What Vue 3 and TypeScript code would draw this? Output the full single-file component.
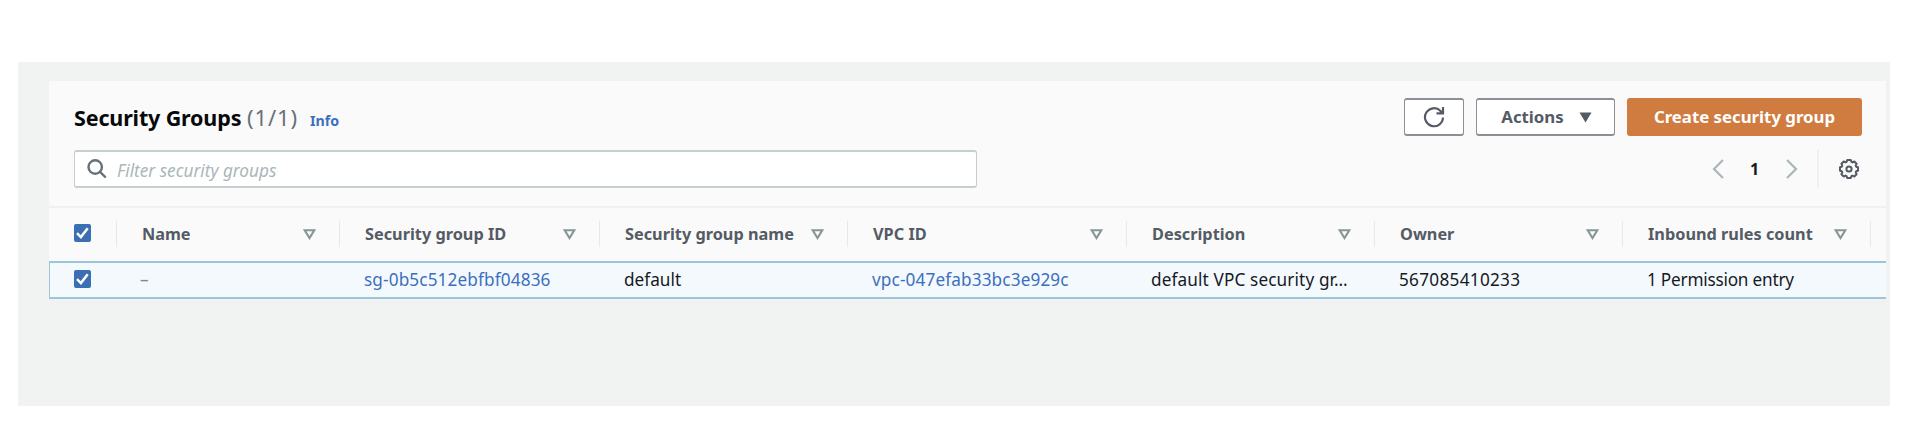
<script setup lang="ts">
interface Column {
  title: string
  value: string
  kind: 'muted' | 'link' | 'text'
  tracking: 'tight' | 'normal' | 'wide' | 'wider'
}

const columns: Column[] = [
  { title: 'Name', value: '–', kind: 'muted', tracking: 'normal' },
  { title: 'Security group ID', value: 'sg-0b5c512ebfbf04836', kind: 'link', tracking: 'wide' },
  { title: 'Security group name', value: 'default', kind: 'text', tracking: 'normal' },
  { title: 'VPC ID', value: 'vpc-047efab33bc3e929c', kind: 'link', tracking: 'wide' },
  { title: 'Description', value: 'default VPC security gr…', kind: 'text', tracking: 'wide' },
  { title: 'Owner', value: '567085410233', kind: 'text', tracking: 'wider' },
  { title: 'Inbound rules count', value: '1 Permission entry', kind: 'text', tracking: 'tight' },
]
</script>

<template>
  <main class="page">
    <section class="panel">
      <header class="top">
        <div class="heading">
          <h1>Security Groups</h1>
          <span class="count">(1/1)</span>
          <a class="info">Info</a>
        </div>
        <div class="actions">
          <button class="btn refresh" aria-label="Refresh">
            <svg width="22" height="22" viewBox="0 0 22 22" fill="none" stroke="#545b64" stroke-width="2.200">
              <path d="M20 11.500a9 9 0 1 1-2.500-6.500L19 6.500M20 1v6.300h-6.500" />
            </svg>
          </button>
          <button class="btn menu">
            <span>Actions</span>
            <svg width="13" height="11" viewBox="0 0 13 11"><path d="M.5.5h12L6.500 10.500z" fill="#545b64" /></svg>
          </button>
          <button class="btn create">Create security group</button>
        </div>
      </header>
      <div class="tools">
        <div class="search">
          <svg width="20" height="20" viewBox="0 0 20 20" fill="none" stroke="#687078" stroke-width="2.4">
            <circle cx="8.200" cy="8" r="6.700" /><path d="M13 12.800l5.700 5.700" />
          </svg>
          <span class="placeholder">Filter security groups</span>
        </div>
        <nav class="pager">
          <svg width="12" height="20" viewBox="0 0 12 20" fill="none" stroke="#aab7b8" stroke-width="2.200"><path d="M11 1L2 10l9 9" /></svg>
          <b>1</b>
          <svg width="12" height="20" viewBox="0 0 12 20" fill="none" stroke="#aab7b8" stroke-width="2.200"><path d="M1 1l9 9-9 9" /></svg>
          <span class="rule"></span>
          <svg width="20" height="20" viewBox="0 0 20 20" fill="none" stroke="#545b64" stroke-width="2">
            <path stroke-linejoin="round" d="M8.200 1h3.600l.6 1.900 1.100.5 1.800-.9 2.300 2.300-.9 1.800.5 1.100 1.800.6v3.400l-1.800.6-.5 1.100.9 1.800-2.300 2.300-1.800-.9-1.100.5-.6 1.900H8.200l-.6-1.900-1.100-.5-1.800.9-2.300-2.300.9-1.800-.5-1.100L1 11.700V8.300l1.800-.6.5-1.100-.9-1.800 2.300-2.300 1.800.9 1.100-.5z" />
            <circle cx="10" cy="10" r="2.600" />
          </svg>
        </nav>
      </div>
      <div class="grid head">
        <div class="cell pick">
          <span class="box"><svg width="17" height="18" viewBox="0 0 17 18"><path d="M3 9.200l3.900 3.900L13.700 4.200" fill="none" stroke="#fff" stroke-width="2.500" /></svg></span>
        </div>
        <div v-for="c in columns" :key="c.title" class="cell">
          <span>{{ c.title }}</span>
          <svg width="13" height="11" viewBox="0 0 13 11"><path d="M1.700 1.200h9.600L6.500 9z" fill="none" stroke="#879596" stroke-width="2.100" /></svg>
        </div>
      </div>
      <div class="grid row">
        <div class="cell pick">
          <span class="box"><svg width="17" height="18" viewBox="0 0 17 18"><path d="M3 9.200l3.900 3.900L13.700 4.200" fill="none" stroke="#fff" stroke-width="2.500" /></svg></span>
        </div>
        <div v-for="c in columns" :key="c.title" class="cell" :class="[c.kind, c.tracking]">{{ c.value }}</div>
      </div>
    </section>
  </main>
</template>

<style>
body { background: #fff; }
</style>

<style scoped>
.page { box-sizing: border-box; margin: 62px 0 0 18px; width: 1872px; height: 344px; padding: 19px 4px 0 31px; background: #f1f3f3; font: 17.2px/24px "Noto Sans", sans-serif; color: #16191f; }
.panel { background: #fafafa; }
.top { display: flex; justify-content: space-between; height: 69px; padding: 17px 24px 0 25px; box-sizing: border-box; }
.heading { display: flex; align-items: baseline; height: 38px; line-height: 38px; white-space: nowrap; }
h1 { width: 168px; margin: 0; font-size: 21.5px; font-weight: 700; letter-spacing: -0.15px; color: #08090b; }
.count { width: 52px; margin-left: 5px; font-size: 22px; letter-spacing: 0.9px; color: #687078; }
.info { margin-left: 11px; font-size: 14.2px; font-weight: 700; color: #3b70bd; }
.actions { display: flex; gap: 12px; }
.btn { box-sizing: border-box; height: 38px; display: flex; align-items: center; justify-content: center; padding: 0; border: solid #8b9096; border-width: 2px 1px; border-radius: 3px; background: #fff; color: #545b64; font: 700 16.8px/24px "Noto Sans", sans-serif; }
.refresh { width: 60px; }
.menu { width: 139px; gap: 15px; padding-left: 2px; }
.create { width: 235px; border-color: #d07c41; background: #d07c41; color: #fff; }
.tools { display: flex; justify-content: space-between; height: 56px; padding: 0 27px 0 25px; }
.search { box-sizing: border-box; width: 903px; height: 38px; display: flex; align-items: center; gap: 10px; padding-left: 12px; border: solid #c5cfcf; border-width: 2px 1px; border-radius: 3px; background: #fff; }
.placeholder { margin-top: 3px; font-style: italic; color: #aab7b8; }
.pager { height: 38px; display: flex; align-items: center; }
.pager b { width: 9px; margin: 0 27px 0 26px; font-size: 16px; }
.rule { width: 2px; height: 38px; margin: 0 20px 0 19px; background: #eff1f1; }
.grid { display: grid; grid-template-columns: 68px 223px 260px 248px 279px 248px 248px 248px; white-space: nowrap; }
.head { height: 55px; border-top: 2px solid #eff1f1; box-sizing: border-box; }
.head .cell { display: flex; align-items: center; justify-content: space-between; height: 26px; margin-top: 13px; padding: 0 23px 0 25px; border-right: 1px solid #e6e9e9; color: #545b64; font-size: 16.3px; font-weight: 700; }
.head .box { margin-top: -2px; }
.row { box-sizing: border-box; height: 38px; border: solid #9fc5da; border-width: 2px 0 2px 1px; background: #f4f9fe; }
.row .cell { padding-left: 23px; line-height: 34px; }
.row .pick { padding: 7px 0 0 24px; }
.row .link { color: #3b70bd; }
.row .muted { padding-left: 22px; color: #7d8a8b; }
.wide { letter-spacing: 0.12px; }
.wider { letter-spacing: 0.28px; }
.tight { letter-spacing: -0.22px; }
.box { display: block; width: 17px; height: 18px; background: #3b6fb4; border-radius: 2px; }
.box svg { display: block; }
</style>
